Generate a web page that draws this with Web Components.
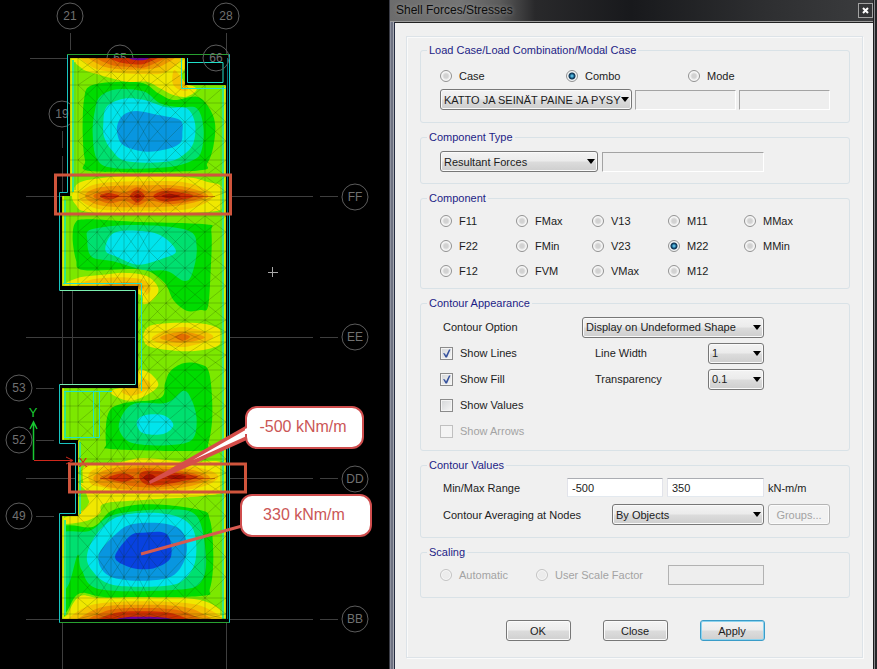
<!DOCTYPE html>
<html lang="en">
<head>
<meta charset="utf-8">
<title>Shell Forces/Stresses</title>
<style>
html,body{margin:0;height:100%;background:#000}
body{font:11px/14px "Liberation Sans",Arial,sans-serif;color:#1c1c1c}
</style>
</head>
<body>
<app-workspace>
  <model-view slot="model"></model-view>
  <dialog-window slot="dialog" heading="Shell Forces/Stresses">
    <load-case-panel></load-case-panel>
    <component-type-panel></component-type-panel>
    <component-panel></component-panel>
    <appearance-panel></appearance-panel>
    <values-panel></values-panel>
    <scaling-panel></scaling-panel>
    <dialog-actions></dialog-actions>
  </dialog-window>
</app-workspace>
<script>
const controls = `
:host{display:block}
*{box-sizing:border-box}
input,select,button{font:inherit;color:inherit;margin:0}
.row{display:grid;align-items:center}
.opt{display:flex;align-items:center;gap:7px;white-space:nowrap}
.off{color:#a3a3a3}
.name{padding-left:3px;white-space:nowrap}
input[type=radio]{appearance:none;width:12px;height:12px;border:1px solid #929292;border-radius:50%;background:radial-gradient(circle,#d2d2d2 0 2px,#f4f4f4 4px);box-shadow:inset 0 0 0 1px #f8f8f8}
input[type=radio]:checked{background:radial-gradient(circle at 50% 50%,#58b8dc 0 1px,#155a86 2px,#12334f 3px,#e4eef2 4px)}
input[type=radio]:disabled{border-color:#c4c4c4;background:#ececec}
.tick{display:grid;width:13px;height:13px}
.tick>*{grid-area:1/1}
.tick input{appearance:none;width:13px;height:13px;border:1px solid #8b8b8b;background:linear-gradient(135deg,#d4d6d8,#f6f6f6);box-shadow:inset 0 0 0 1px #f4f4f4}
.tick input:disabled{border-color:#c0c0c0;background:#f4f4f4}
.tick svg{pointer-events:none;width:13px;height:13px}
.combo{display:grid;align-items:center}
.combo>*{grid-area:1/1}
.combo select{appearance:none;width:100%;min-width:0;height:21px;padding:0 10px 0 3px;border:1px solid #777;border-radius:3px;background:linear-gradient(#f3f3f3,#ebebeb 48%,#dcdcdc 52%,#cecece);box-shadow:inset 0 0 0 1px #fafafa}
.combo svg{justify-self:end;margin-right:3px;width:8px;height:5px;pointer-events:none}
input[type=text]{width:100%;min-width:0;height:19px;padding:0 4px;border:1px solid;border-color:#abadb3 #e2e3ea #e3e9ef #e2e3ea;background:#fff;border-radius:0}
input[type=text].sunk{height:20px;background:#eee;border-color:#a3a3a3 #fff #fff #a3a3a3}
input[type=text].plain{height:20px;background:#eee;border-color:#b2b2b2}
button{height:21px;padding:0;border:1px solid #777;border-radius:3px;background:linear-gradient(#f4f4f4,#ececec 48%,#dcdcdc 52%,#d0d0d0);box-shadow:inset 0 0 0 1px #fbfbfb}
button:disabled{color:#a3a3a3;border-color:#b4b4b4;background:#f2f2f2}
`;
const combo = (id, value, extra = '') =>
  `<span class="combo"><select id="${id}" ${extra}><option>${value}</option></select><svg viewBox="0 0 8 5" aria-hidden="true"><path d="M0 0H8L4 5Z" fill="#000"/></svg></span>`;
const radio = (name, text, state = '') =>
  `<label class="opt ${state === 'disabled' ? 'off' : ''}"><input type="radio" name="${name}" ${state}>${text}</label>`;
const check = (text, state = '') =>
  `<label class="opt ${state === 'disabled' ? 'off' : ''}"><span class="tick"><input type="checkbox" ${state}>${state === 'checked' ? '<svg viewBox="0 0 13 13" aria-hidden="true"><path d="M3 6L5 6.500L6 8.500L9 2.500L10.500 2.500L7 10.500H5.500Z" fill="#34509c"/></svg>' : ''}</span>${text}</label>`;

function define(tag, css, markup) {
  const template = document.createElement('template');
  template.innerHTML = `<style>${css}</style>${markup}`;
  customElements.define(tag, class extends HTMLElement {
    constructor() {
      super();
      this.attachShadow({mode: 'open'}).append(template.content.cloneNode(true));
    }
    connectedCallback() {
      const heading = this.shadowRoot.querySelector('.heading');
      if (heading) heading.textContent = this.getAttribute('heading');
    }
  });
}

define('app-workspace', `
:host{display:grid;grid-template-columns:minmax(0,389fr) minmax(0,488fr);min-height:100%}
`, `<slot name="model"></slot><slot name="dialog"></slot>`);

define('dialog-window', `
:host{display:flex;flex-direction:column;box-sizing:border-box;padding:0 4px 0 6px;background:linear-gradient(90deg,#3a3c46 0 1px,#8e919e 1px 2px,#6e7282 2px 4px,#a6a9b2 4px 5px,#252b40 5px 6px,#222 6px calc(100% - 4px),#1c1c1e calc(100% - 4px) calc(100% - 3px),#85878a calc(100% - 3px) calc(100% - 2px),#252528 calc(100% - 2px))}
header{display:flex;align-items:center;justify-content:space-between;box-sizing:border-box;height:22px;margin-left:-5px;padding:0 0 1px 6px;border-bottom:1px solid #9c9c9c;background:linear-gradient(90deg,#6c6c6c,#757575 70px,#5b5b5b 110px,#29292b 145px,#18191c 50%,#2e2f31 78%,#3b3c3e)}
h1{margin:0;font:12px/16px "Liberation Sans",Arial,sans-serif;color:#0c0c0c;text-shadow:0 0 4px #999}
button{display:grid;place-items:center;width:15px;height:15px;padding:0;border:1px solid #a2a2a2;background:#333436}
svg{width:7px;height:7px}
main{flex:1;padding:13px 10px 11px 11px;border-top:1px solid #222;background:#f0f0f0}
.frame{display:flex;flex-direction:column;gap:7px;box-sizing:border-box;height:100%;padding:6px 12px 16px 13px;border:1px solid #dde3e8;box-shadow:inset 1px 1px #fafafa,1px 1px #fafafa}
`, `<header><h1 class="heading"></h1><button aria-label="Close window"><svg viewBox="0 0 7 7"><path d="M1 1L6 6M6 1L1 6" stroke="#fff" stroke-width="2"/></svg></button></header><main><div class="frame"><slot></slot></div></main>`);

define('group-box', `
:host{display:block}
fieldset{min-width:0;margin:0;padding:0 19px;border:1px solid #d9e2e7;border-radius:3px}
legend{margin-left:-13px;padding:0 2px;line-height:14px;color:#1d1d86}
`, `<fieldset><legend class="heading"></legend><slot></slot></fieldset>`);

define('load-case-panel', controls + `
.radios{grid-template-columns:126fr 122fr 142fr;height:20px;margin-top:9px}
.fields{grid-template-columns:192fr 101fr 91fr;gap:3px;margin:3px 0 12px}
`, `<group-box heading="Load Case/Load Combination/Modal Case">
<div class="row radios">${radio('case', 'Case')}${radio('case', 'Combo', 'checked')}${radio('case', 'Mode')}</div>
<div class="row fields">${combo('combo', 'KATTO JA SEINÄT PAINE JA PYSY', 'aria-label="Combination"')}<input type="text" class="sunk" aria-label="Step type" readonly><input type="text" class="sunk" aria-label="Step" readonly></div>
</group-box>`);

define('component-type-panel', controls + `
.fields{grid-template-columns:158fr 162fr 62fr;gap:4px;margin:7px 0 11px}
`, `<group-box heading="Component Type"><div class="row fields">${combo('type', 'Resultant Forces', 'aria-label="Component type"')}<input type="text" class="sunk" aria-label="Component detail" readonly></div></group-box>`);

define('component-panel', controls + `
.radios{grid-template-columns:76fr 76fr 76fr 76fr 86fr;grid-auto-rows:25px;margin:3px 0 5px}
`, `<group-box heading="Component"><div class="row radios">
${['F11', 'FMax', 'V13', 'M11', 'MMax', 'F22', 'FMin', 'V23', 'M22', 'MMin', 'F12', 'FVM', 'VMax', 'M12'].map(n => radio('component', n, n === 'M22' ? 'checked' : '')).join('')}
</div></group-box>`);

define('appearance-panel', controls + `
.fields{grid-template-columns:142fr 126fr 56fr 66fr;grid-auto-rows:26px;margin:4px 0 6px}
.wide{grid-column:2/4}
.fields>:is(.opt,.name.first){grid-column:1}
.second{padding-left:13px}
`, `<group-box heading="Contour Appearance"><div class="row fields">
<label class="name first" for="option">Contour Option</label><div class="wide">${combo('option', 'Display on Undeformed Shape')}</div>
${check('Show Lines', 'checked')}<label class="second" for="width">Line Width</label>${combo('width', '1')}
${check('Show Fill', 'checked')}<label class="second" for="transparency">Transparency</label>${combo('transparency', '0.1')}
${check('Show Values')}${check('Show Arrows', 'disabled')}
</div></group-box>`);

define('values-panel', controls + `
.row{height:27px;gap:4px}
.range{grid-template-columns:123fr 96fr 97fr 62fr;margin-top:2px}
.nodes{grid-template-columns:168fr 152fr 62fr;margin-bottom:9px}
`, `<group-box heading="Contour Values">
<div class="row range"><label class="name" for="min">Min/Max Range</label><input type="text" id="min" value="-500"><input type="text" value="350" aria-label="Maximum"><span>kN-m/m</span></div>
<div class="row nodes"><label class="name" for="nodes">Contour Averaging at Nodes</label>${combo('nodes', 'By Objects')}<button disabled>Groups...</button></div>
</group-box>`);

define('scaling-panel', controls + `
.row{grid-template-columns:96fr 132fr 96fr 66fr;margin:6px 0 12px}
`, `<group-box heading="Scaling"><div class="row">${radio('scale', 'Automatic', 'disabled')}${radio('scale', 'User Scale Factor', 'disabled')}<input type="text" class="plain" aria-label="Scale factor" disabled></div></group-box>`);

define('dialog-actions', controls + `
div{display:flex;justify-content:center;gap:32px;padding-top:15px}
button{width:65px}
.main{border-color:#3a9cc8;box-shadow:inset 0 0 0 1px #8cd2ee}
`, `<div><button>OK</button><button>Close</button><button class="main">Apply</button></div>`);

/* Model view: contour bands are listed as point loops at three units per pixel, with a vertical origin per region. */
const loop = (text, dy) => {
  const p = text.split(' ').map(s => s.split(',').map(Number)).map(([x, y]) => [x, y + dy]);
  const n = p.length, at = i => p[(i + n) % n];
  let d = `M${p[0]}`;
  for (let i = 0; i < n; i++) {
    const [a, b, c, e] = [at(i - 1), at(i), at(i + 1), at(i + 2)];
    d += `C${[b[0] + (c[0] - a[0]) / 6, b[1] + (c[1] - a[1]) / 6, c[0] - (e[0] - b[0]) / 6, c[1] - (e[1] - b[1]) / 6, c[0], c[1]].map(Math.round)}`;
  }
  return d + 'Z';
};
const G = '#00dc00', T = '#00e070', C = '#00e4ec', B = '#0896e0', D = '#0842e0',
      Y = '#f0e800', A = '#f4c400', O = '#ee9800', R = '#e46c00', X = '#d03000', K = '#a81000', P = '#7000a0';
const bands = [
  [0, G, '252,300 270,258 350,246 430,250 475,280 520,300 590,290 625,320 645,370 640,440 622,490 590,512 280,514 255,480 248,400'],
  [0, T, '285,330 300,290 350,268 430,274 480,310 540,322 590,325 610,380 605,450 580,480 500,502 340,504 290,475 278,400'],
  [0, C, '310,370 320,320 370,296 430,299 500,322 560,325 585,370 580,430 550,465 500,485 380,484 335,450 312,410'],
  [0, B, '351,380 370,345 410,333 470,344 540,360 547,400 540,430 500,448 440,455 390,445 360,425'],
  [0, Y, '235,160 245,205 300,225 380,245 440,245 480,265 520,285 560,290 590,268 560,250 545,230 540,160'],
  [0, A, '255,160 275,200 330,215 430,222 500,215 530,160'],
  [0, O, '275,160 300,195 360,208 440,208 490,195 515,160'],
  [0, R, '290,160 325,192 390,201 440,200 500,160'],
  [0, X, '320,160 350,184 400,193 440,189 480,160'],
  [0, P, '380,160 390,176 420,181 445,176 455,160'],
  [0, A, '522,210 545,235 565,268 540,270 518,250'],
  [480, G, '218,240 225,190 260,178 400,185 615,193 634,215 632,330 624,440 600,450 560,452 520,420 495,370 450,335 400,327 250,330 228,300'],
  [480, T, '262,240 275,208 400,195 560,210 590,260 575,345 550,362 500,333 430,330 340,304 275,290'],
  [480, C, '316,270 340,220 410,212 480,225 528,272 490,295 415,314 350,290'],
  [480, Y, '190,395 195,372 240,352 300,345 370,338 440,348 475,385 460,418 430,432 405,400'],
  [480, A, '235,385 270,360 360,352 430,360 452,385 438,405 415,390'],
  [480, O, '300,382 350,368 410,368 430,380 415,386'],
  [480, Y, '216,108 235,70 300,55 420,46 560,52 620,65 665,80 668,135 630,155 400,162 260,155 228,135'],
  [480, A, '236,108 290,72 420,64 560,68 640,108 560,148 410,152 290,146'],
  [480, O, '255,108 300,82 420,76 540,78 625,108 540,136 410,142 300,136'],
  [480, R, '280,108 325,90 370,98 412,82 450,95 510,84 612,108 520,132 450,122 412,136 370,122 325,130'],
  [480, X, '300,108 325,99 358,108 325,119'],
  [480, X, '390,108 412,90 434,108 412,128'],
  [480, X, '460,108 500,92 580,108 500,125'],
  [480, K, '402,108 413,102 424,108 413,115'],
  [480, K, '484,108 510,102 542,108 510,115'],
  [480, Y, '430,535 445,500 500,490 600,490 655,505 665,535 648,560 560,574 455,562'],
  [480, A, '455,535 500,510 560,502 640,530 560,560 490,552'],
  [480, O, '480,533 545,515 615,532 545,548'],
  [480, R, '525,530 548,522 570,530 548,542'],
  [990, G, '495,160 510,125 550,100 600,103 628,130 637,250 625,340 600,362 340,358 318,340 325,250 370,220 480,205'],
  [990, T, '360,270 400,222 500,218 550,182 575,210 590,270 575,330 500,346 400,340 362,310'],
  [990, C, '410,280 430,257 490,256 520,285 490,312 430,310'],
  [990, Y, '335,182 400,160 415,120 450,130 475,165 440,195 390,212 345,198'],
  [990, A, '365,182 410,165 430,145 452,165 430,186 390,197'],
  [990, Y, '248,440 262,405 360,396 430,384 560,396 670,400 672,480 600,498 430,510 300,520 285,540 262,500'],
  [990, A, '265,440 300,412 430,400 590,412 655,440 590,474 430,490 300,478'],
  [990, O, '280,443 330,416 430,408 560,416 630,443 560,470 430,480 320,470'],
  [990, R, '300,443 360,422 430,414 540,422 612,443 540,464 430,472 360,460'],
  [990, X, '325,443 370,430 402,443 370,455'],
  [990, X, '418,443 445,422 590,438 540,455 450,466'],
  [990, K, '430,443 450,432 470,445 450,455'],
  [990, K, '500,440 530,434 560,440 530,448'],
  [1470, Y, '240,-20 300,-10 400,8 650,0 660,10 560,22 400,26 310,42 300,70 262,92 190,102 190,85 250,60 270,20'],
  [1470, G, '170,130 280,110 340,60 450,43 600,60 630,90 640,200 630,295 600,318 330,322 240,310 200,365 170,400'],
  [1470, T, '170,140 270,122 340,75 500,58 590,78 618,200 600,280 520,300 300,298 245,240 233,195 205,285 170,300'],
  [1470, C, '262,190 300,120 370,75 500,72 575,110 588,200 560,260 500,287 340,285 275,240'],
  [1470, B, '295,200 350,130 400,102 500,102 550,130 557,200 500,265 340,263'],
  [1470, D, '345,200 390,138 430,128 500,132 513,200 470,232 430,238 385,230'],
  [1470, Y, '200,420 205,370 240,318 300,324 430,322 600,330 680,375 690,420'],
  [1470, A, '225,420 260,350 430,334 610,350 650,420'],
  [1470, O, '240,420 290,356 430,344 580,358 630,420'],
  [1470, R, '255,420 315,364 430,354 555,366 610,420'],
  [1470, X, '270,420 335,372 430,364 530,374 590,420'],
  [1470, P, '290,420 350,387 430,380 520,388 550,420']
].map(([dy, fill, pts]) => `<path d="${loop(pts, dy)}" fill="${fill}"/>`).join('');

const xs = [62, 70, 78, 97, 111, 124, 138, 149, 166, 185, 205, 226];
const ys = [58, 72, 85, 103, 122, 141, 160, 176, 192, 200, 216, 232, 251, 268, 286, 303, 320, 332, 342, 355, 370, 388, 406, 422, 440, 459, 473, 482, 496, 516, 536, 557, 577, 598, 614, 619];
let mesh = '', braces = '';
xs.forEach(x => mesh += `M${x} 58V619`);
ys.forEach(y => mesh += `M62 ${y}H226`);
for (let i = 2; i < xs.length - 1; i++) for (let j = 0; j < ys.length - 1; j++)
  braces += (i + j) % 3 ? `M${xs[i]} ${ys[j]}L${xs[i + 1]} ${ys[j + 1]}M${xs[i + 1]} ${ys[j]}L${xs[i]} ${ys[j + 1]}` : `M${xs[i]} ${ys[j + 1]}L${xs[i + 1]} ${ys[j]}`;
const bubble = ([x, y, t]) => `<circle cx="${x}" cy="${y}" r="13"/><text x="${x}" y="${y + 4}">${t}</text>`;
const slab = 'M70 58H185V85H226V619H62V516H78V440H62V388H138V286H62V196H70Z';

define('model-view', `
:host{display:block;background:#000;overflow:hidden}
svg{display:block;width:100%;height:auto}
text{font-family:"Liberation Sans",Arial,sans-serif}
.bubbles circle{fill:none;stroke:#5c5c5c;stroke-width:1}
.bubbles text{fill:#717171;font-size:12px;text-anchor:middle}
.axis{font-size:13px;text-anchor:middle}
.note rect{fill:#fff;stroke:#cf4d4d;stroke-width:2}
.note text{fill:#cb5656;font-size:16px;text-anchor:middle}
`, `<svg viewBox="0 0 389 669" role="img" aria-label="Shell moment contours">
<defs><clipPath id="slab"><path d="${slab}"/></clipPath></defs>
<path d="M70.500 33V50M226.500 33V54M62.500 131V148M62.500 156V192M62.500 290V384M72.500 290V384M62.500 623V669M226.500 623V669M30 58.500H67M26 196.500H62M229 196.500H313M320 196.500H338M26 337.500H135M229 337.500H313M320 337.500H338M36 388.500H54M36 440.500H54M26 478.500H75M229 478.500H313M320 478.500H338M36 516.500H54M26 619.500H60M229 619.500H313M320 619.500H338" stroke="#3e3e3e" fill="none"/>
<g class="bubbles">${[[70, 16, '21'], [226, 16, '28'], [120, 58, '65'], [62, 114, '19'], [355, 197, 'FF'], [355, 337, 'EE'], [355, 479, 'DD'], [355, 619, 'BB'], [19, 388, '53'], [19, 440, '52'], [19, 516, '49']].map(bubble).join('')}</g>
<g clip-path="url(#slab)">
<path d="${slab}" fill="#7ce800"/>
<g transform="scale(.333333)">${bands}</g>
<path d="M226 85V619M70 58V196M62 196V286M62 388V440M78 440V516M62 516V619" fill="none" stroke="#d8ec00" stroke-width="4"/>
<path d="M223 86V619M73 60V192M65 200V284M65 392V438M80 442V514M65 520V615" stroke="#34e884" stroke-width="2" fill="none"/>
<path d="M75 62V190M221 90V615" stroke="#52dc20" fill="none"/>
<path d="${mesh}" stroke="#163000" stroke-opacity=".22" fill="none"/>
<path d="${braces}" stroke="#163000" stroke-opacity=".2" fill="none"/>
<path d="M100 196.500H215M100 478.500H215" stroke="#700" stroke-opacity=".4"/>
</g>
<g fill="none">
<path d="M67.500 54.500H229.500V622.500H59.500V513.500H75.500V443.500H59.500V384.500H135.500V290.500H59.500V192.500H67.500Z" stroke="#18c4c0"/>
<path d="M67 54.500H229M60 622.500H229" stroke="#28a030"/>
<path d="M60 290.500H135M60 384.500H135" stroke="#7af0b0"/>
<path d="M181.500 58V88.500H226M187.500 58V82.500H223V62.500H187M63 283.500H141.500V391M64 391.500H112M64 437.500H99.500V391M93.500 391V437" stroke="#20e0c8"/>
<path d="M227.500 58V619" stroke="#007080"/>
</g>
<g class="bubbles">${bubble([216, 58, '66'])}</g>
<path d="M33.500 460V423M30 429L33.500 422L37 429" stroke="#19c832" stroke-width="1.500" fill="none"/>
<path d="M34 460.500H72M66 457L73 460.500L66 464" stroke="#d0281c" fill="none"/>
<text class="axis" x="33" y="417" fill="#19c832">Y</text>
<text class="axis" x="83" y="467" fill="#d0281c">X</text>
<path d="M268 272.500H278M272.500 267V277" stroke="#a8a8a8"/>
<rect x="55.500" y="175" width="175" height="39" fill="none" stroke="#d0553c" stroke-width="3"/>
<rect x="69.500" y="464" width="176" height="28" fill="none" stroke="#d0553c" stroke-width="3"/>
<path d="M249 424L149 481L150 484L249 439Z" fill="#d64e4a"/>
<path d="M249 428L193 460L249 435Z" fill="#fff"/>
<path d="M242 526L141 554" stroke="#d65a50" stroke-width="3"/>
<g class="note"><rect x="246" y="407" width="117" height="41" rx="11"/><path d="M245 429L252 426V434L245 434Z" fill="#fff"/><text x="303" y="432">-500 kNm/m</text>
<rect x="241" y="495" width="130" height="41" rx="11"/><text x="304" y="520">330 kNm/m</text></g>
</svg>`);
</script>
</body>
</html>
